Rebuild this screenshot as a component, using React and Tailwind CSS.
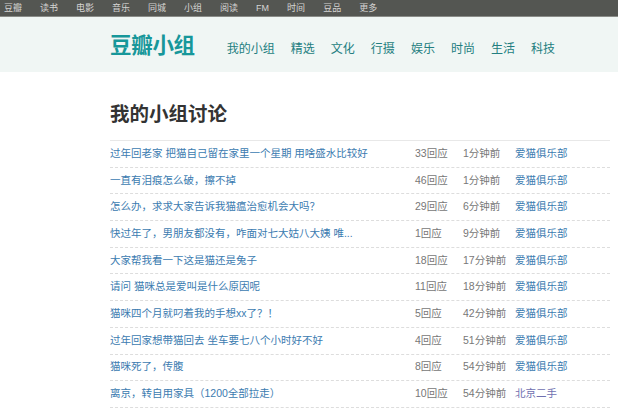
const topLinks = ["豆瓣", "读书", "电影", "音乐", "同城", "小组", "阅读", "FM", "时间", "豆品", "更多"];

const navLinks = ["我的小组", "精选", "文化", "行摄", "娱乐", "时尚", "生活", "科技"];

const topics = [
  { title: "过年回老家 把猫自己留在家里一个星期 用啥盛水比较好", replies: "33回应", time: "1分钟前", group: "爱猫俱乐部" },
  { title: "一直有泪痕怎么破，擦不掉", replies: "46回应", time: "1分钟前", group: "爱猫俱乐部" },
  { title: "怎么办，求求大家告诉我猫瘟治愈机会大吗？", replies: "29回应", time: "6分钟前", group: "爱猫俱乐部" },
  { title: "快过年了，男朋友都没有，咋面对七大姑八大姨 唯...", replies: "1回应", time: "9分钟前", group: "爱猫俱乐部" },
  { title: "大家帮我看一下这是猫还是兔子", replies: "18回应", time: "17分钟前", group: "爱猫俱乐部" },
  { title: "请问 猫咪总是爱叫是什么原因呢", replies: "11回应", time: "18分钟前", group: "爱猫俱乐部" },
  { title: "猫咪四个月就叼着我的手想xx了？！", replies: "5回应", time: "42分钟前", group: "爱猫俱乐部" },
  { title: "过年回家想带猫回去 坐车要七八个小时好不好", replies: "4回应", time: "51分钟前", group: "爱猫俱乐部" },
  { title: "猫咪死了，传腹", replies: "8回应", time: "54分钟前", group: "爱猫俱乐部" },
  { title: "离京，转自用家具（1200全部拉走）", replies: "10回应", time: "54分钟前", group: "北京二手", visited: true },
];

const TopicRow = ({ topic }) => (
  <div className="flex items-center h-[26.7px] border-b border-dashed border-[#dddddd] text-[10.5px]">
    <a className="w-[305px] text-[#3b7bb0] truncate pr-2">{topic.title}</a>
    <span className="w-[48px] text-[#777777]">{topic.replies}</span>
    <span className="w-[52px] text-[#777777]">{topic.time}</span>
    <a className={topic.visited ? "text-[#7070b0]" : "text-[#3b7bb0]"}>{topic.group}</a>
  </div>
);

export default function App() {
  return (
    <div className="w-[618px] h-[414px] overflow-hidden bg-white" style={{ fontFamily: '"Liberation Sans", "Noto Sans CJK SC", sans-serif' }}>
      {/* global bar */}
      <div className="h-[17px] bg-[#545652] border-b border-[#8a8c88] flex items-center pl-[4px] gap-[18px] text-[9px] text-[#d4d4d2]">
        {topLinks.map((l) => (
          <a key={l} className="leading-none">{l}</a>
        ))}
      </div>

      {/* group header */}
      <div className="h-[55px] bg-[#f0f6f4] flex items-baseline pl-[110px] pt-[14px]">
        <div className="text-[21.5px] font-bold text-[#17979a] leading-[30px] tracking-[-0.3px]">豆瓣小组</div>
        <div className="flex gap-[16px] ml-[32px] text-[12px] text-[#237e80]">
          {navLinks.map((l) => (
            <a key={l}>{l}</a>
          ))}
        </div>
      </div>

      {/* main */}
      <div className="pl-[110px] w-[610px]">
        <h1 className="pt-[28px] text-[19.5px] font-bold text-[#333333] leading-[28px] pb-[12px] border-b border-[#e8e8e8]">
          我的小组讨论
        </h1>
        <div>
          {topics.map((t, i) => (
            <TopicRow key={i} topic={t} />
          ))}
        </div>
      </div>
    </div>
  );
}
